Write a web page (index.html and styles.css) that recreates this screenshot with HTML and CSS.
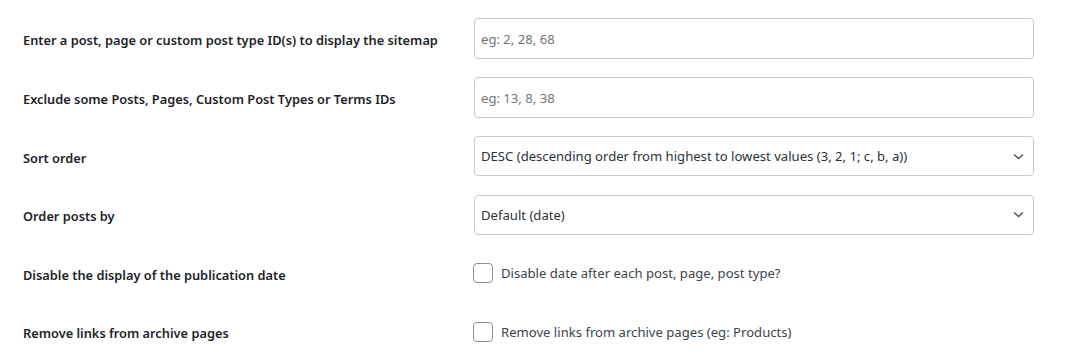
FILE: index.html
```html
<!DOCTYPE html>
<html lang="en">
<head>
<meta charset="utf-8">
<title>Sitemap settings</title>
<link rel="stylesheet" href="styles.css">
</head>
<body>
<form class="form-table">
  <div class="row row-tall">
    <label class="label" for="ids">Enter a post, page or custom post type ID(s) to display the sitemap</label>
    <div class="field"><input id="ids" class="text-input" type="text" placeholder="eg: 2, 28, 68"></div>
  </div>
  <div class="row row-tall">
    <label class="label" for="exclude">Exclude some Posts, Pages, Custom Post Types or Terms IDs</label>
    <div class="field"><input id="exclude" class="text-input" type="text" placeholder="eg: 13, 8, 38"></div>
  </div>
  <div class="row">
    <label class="label" for="sort">Sort order</label>
    <div class="field">
      <div class="select" id="sort">
        <span class="select-value">DESC (descending order from highest to lowest values (3, 2, 1; c, b, a))</span>
        <svg class="chevron" width="11" height="7" viewBox="0 0 11 7"><path d="M1 1.5 L5.5 5.5 L10 1.5" fill="none" stroke="#50575e" stroke-width="1.5"/></svg>
      </div>
    </div>
  </div>
  <div class="row">
    <label class="label" for="orderby">Order posts by</label>
    <div class="field">
      <div class="select" id="orderby">
        <span class="select-value">Default (date)</span>
        <svg class="chevron" width="11" height="7" viewBox="0 0 11 7"><path d="M1 1.5 L5.5 5.5 L10 1.5" fill="none" stroke="#50575e" stroke-width="1.5"/></svg>
      </div>
    </div>
  </div>
  <div class="row">
    <span class="label">Disable the display of the publication date</span>
    <div class="field">
      <label class="check"><span class="box"></span><span class="check-text">Disable date after each post, page, post type?</span></label>
    </div>
  </div>
  <div class="row">
    <span class="label">Remove links from archive pages</span>
    <div class="field">
      <label class="check"><span class="box"></span><span class="check-text">Remove links from archive pages (eg: Products)</span></label>
    </div>
  </div>
</form>
</body>
</html>
```
FILE: styles.css
```css
html, body {
  margin: 0;
  padding: 0;
  background: #ffffff;
}
body {
  font-family: "Noto Sans", "Open Sans", sans-serif;
  color: #1d2327;
}
.form-table {
  display: flex;
  flex-direction: column;
  padding: 9px 0 0 23px;
}
.row {
  display: flex;
  align-items: center;
  height: 58.5px;
}
.row-tall {
  height: 59px;
}
.label {
  width: 451px;
  flex: none;
  font-size: 12.8px;
  font-weight: 600;
  color: #1d2327;
  padding-top: 3px;
}
.field {
  width: 560px;
  flex: none;
}
.text-input {
  box-sizing: border-box;
  display: block;
  width: 560px;
  height: 41px;
  margin: 0;
  padding: 0 6px;
  border: 1px solid #c8c9cc;
  border-radius: 4px;
  font-family: "Noto Sans", "Open Sans", sans-serif;
  font-size: 13.1px;
  color: #2c3338;
  background: #fff;
  outline: none;
}
.text-input::placeholder {
  color: #72757a;
}
.select {
  box-sizing: border-box;
  display: flex;
  align-items: center;
  justify-content: space-between;
  width: 560px;
  height: 40px;
  padding: 0 9px 0 6px;
  border: 1px solid #c8c9cc;
  border-radius: 4px;
  font-size: 13.1px;
  color: #2c3338;
}
.chevron {
  flex: none;
}
.check {
  display: flex;
  align-items: center;
  gap: 8px;
  margin-left: -1px;
}
.box {
  box-sizing: border-box;
  width: 20px;
  height: 20px;
  border: 1px solid #8c8f94;
  border-radius: 4px;
  background: #fff;
  flex: none;
}
.check-text {
  font-size: 13.1px;
  color: #3c434a;
}
```
